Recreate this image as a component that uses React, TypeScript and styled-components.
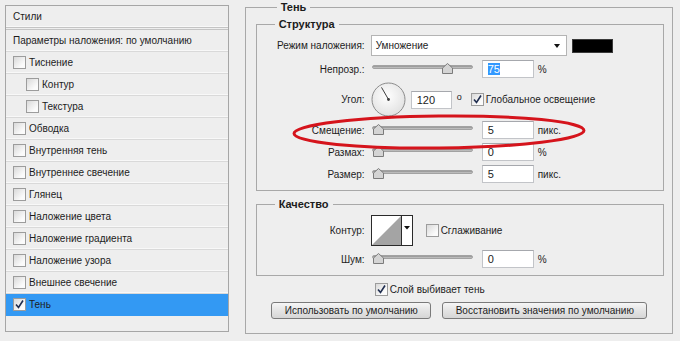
import React from 'react';
import styled, { createGlobalStyle } from 'styled-components';

const GlobalStyle = createGlobalStyle`
  html, body {
    margin: 0;
    padding: 0;
    background: #eeeeee;
  }
  body {
    font-family: "Liberation Sans", Arial, sans-serif;
    font-size: 10px;
    color: #1c1c1c;
  }
`;

const Root = styled.div`
  position: relative;
  width: 680px;
  height: 341px;
  box-sizing: border-box;
  padding: 1px 7px 0 5px;
  display: flex;
  align-items: flex-start;
  gap: 16px;
  overflow: hidden;
`;

const StylesPanel = styled.div`
  margin-top: 4px;
  width: 224px;
  height: 327px;
  box-sizing: border-box;
  border: 1px solid #a6a6a6;
  display: flex;
  flex-direction: column;
`;

const ListRow = styled.div<{ $indent?: boolean; $active?: boolean; $header?: boolean }>`
  height: 21px;
  flex: none;
  display: flex;
  align-items: center;
  gap: 3px;
  padding-left: ${p => (p.$indent ? 20 : 7)}px;
  background: ${p => (p.$active ? '#3399f3' : 'transparent')};
  border-bottom: ${p => (p.$header ? '3px double #c4c4c4' : p.$active ? '1px solid #3399f3' : '1px solid #d9d9d9')};
  box-shadow: ${p => (p.$active ? 'none' : 'inset 0 -1px 0 #f8f8f8')};
`;

const Box = styled.span`
  width: 13px;
  height: 13px;
  box-sizing: border-box;
  flex: none;
  border: 1px solid #9c9c9c;
  background: linear-gradient(135deg, #d9d9d9, #fbfbfb 75%);
  display: inline-flex;
  align-items: center;
  justify-content: center;
`;

const Check = ({ checked }: { checked?: boolean }) => (
  <Box>
    {checked && (
      <svg width="9" height="9" viewBox="0 0 9 9">
        <path d="M1 4.5 L3.5 7.5 L8 0.5" fill="none" stroke="#1f2d4f" strokeWidth="1.6" />
      </svg>
    )}
  </Box>
);

const Shadow = styled.fieldset`
  margin: 0;
  width: 429px;
  height: 333px;
  box-sizing: border-box;
  border: 1px solid #a8a8a8;
  padding: 4px 9px 0 10px;
  display: flex;
  flex-direction: column;
  min-width: 0;
`;

const Legend = styled.legend`
  font-weight: bold;
  font-size: 11px;
  padding: 0 4px;
  margin-left: 21px;
  line-height: 13px;
`;

const Group = styled.fieldset<{ $top?: number }>`
  margin: ${p => p.$top ?? 0}px 0 0 0;
  width: 408px;
  box-sizing: border-box;
  border: 1px solid #a8a8a8;
  padding: 4px 0 7px 0;
  display: flex;
  flex-direction: column;
  gap: 4px;
  min-width: 0;
`;

const GroupLegend = styled(Legend)`
  margin-left: 18px;
`;

const Row = styled.div<{ $h: number }>`
  height: ${p => p.$h}px;
  display: flex;
  align-items: center;
`;

const Label = styled.span`
  width: 108px;
  margin-right: 6px;
  text-align: right;
  flex: none;
`;

const Select = styled.div`
  width: 196px;
  height: 21px;
  box-sizing: border-box;
  border: 1px solid #b4b4b4;
  background: #fff;
  display: flex;
  align-items: center;
  justify-content: space-between;
  padding: 0 6px 0 4px;
`;

const Arrow = styled.span`
  width: 0;
  height: 0;
  border-left: 3.5px solid transparent;
  border-right: 3.5px solid transparent;
  border-top: 4px solid #111;
`;

const Swatch = styled.div`
  width: 41px;
  height: 14px;
  margin-left: 5px;
  background: #000;
  border: 1px solid #3a3a3a;
  box-sizing: border-box;
`;

const SliderBox = styled.div`
  position: relative;
  width: 101px;
  height: 12px;
  margin: 0 9px 0 1px;
  align-self: flex-start;
  margin-top: 3px;
`;

const Track = styled.div`
  position: absolute;
  left: 0;
  right: 0;
  top: 2px;
  height: 4px;
  border-radius: 2px;
  background: linear-gradient(#8f8f8f, #c9c9c9);
  border: 1px solid #a2a2a2;
  box-sizing: border-box;
`;

const Thumb = styled.svg`
  position: absolute;
  top: 0;
`;

const Slider = ({ value }: { value: number }) => (
  <SliderBox>
    <Track />
    <Thumb width="11" height="11" viewBox="0 0 11 11" style={{ left: 1 + (value / 100) * 93 }}>
      <path d="M5.5 0.5 L10.5 5 L10.5 10.5 L0.5 10.5 L0.5 5 Z" fill="#d4d4d4" stroke="#7b7b7b" />
    </Thumb>
  </SliderBox>
);

const Field = styled.div<{ $w?: number }>`
  width: ${p => p.$w ?? 52}px;
  height: 18px;
  box-sizing: border-box;
  border: 1px solid #c2c4c8;
  border-top-color: #a6a8ad;
  background: #fff;
  display: flex;
  align-items: center;
  padding-left: 5px;
  font-size: 11px;
`;

const Selected = styled.span`
  background: #3399ff;
  color: #fff;
`;

const Unit = styled.span`
  margin-left: 4px;
`;

const Degree = styled.span`
  margin: -6px 0 0 5px;
  font-size: 9px;
`;

const Inline = styled.label<{ $ml: number }>`
  display: flex;
  align-items: center;
  gap: 2px;
  margin-left: ${p => p.$ml}px;
`;

const Dial = ({ angle }: { angle: number }) => {
  const r = (angle * Math.PI) / 180;
  const x = 17.5 + Math.cos(r) * 14;
  const y = 17.5 - Math.sin(r) * 14;
  return (
    <svg width="35" height="35" viewBox="0 0 35 35">
      <defs>
        <radialGradient id="dialFill" cx="0.45" cy="0.4" r="0.6">
          <stop offset="0" stopColor="#ffffff" />
          <stop offset="1" stopColor="#e2e2e2" />
        </radialGradient>
      </defs>
      <circle cx="17.5" cy="17.5" r="16.5" fill="url(#dialFill)" stroke="#8c8c8c" />
      <line x1="17.5" y1="17.5" x2={x} y2={y} stroke="#3d3d3d" strokeWidth="1" />
      <circle cx="17.5" cy="17.5" r="1.4" fill="#3d3d3d" />
    </svg>
  );
};

const Contour = () => (
  <svg width="42" height="31" viewBox="0 0 42 31">
    <rect x="0.5" y="0.5" width="41" height="30" fill="#fff" stroke="#2a2a2a" />
    <path d="M1 30 L30 1 L30 30 Z" fill="#a4a4a4" />
    <line x1="30.5" y1="1" x2="30.5" y2="30" stroke="#2a2a2a" />
    <path d="M33 11 L39 11 L36 14.5 Z" fill="#111" />
  </svg>
);

const KnockRow = styled.div`
  margin-top: 7px;
  padding-left: 119px;
  display: flex;
  align-items: center;
  gap: 2px;
  height: 13px;
`;

const Buttons = styled.div`
  margin-top: 6px;
  display: flex;
  justify-content: center;
  gap: 11px;
`;

const Button = styled.button<{ $w: number }>`
  width: ${p => p.$w}px;
  height: 17px;
  padding: 0;
  font-family: inherit;
  font-size: 10px;
  color: #1c1c1c;
  border: 1px solid #7a7a7a;
  border-radius: 3px;
  background: linear-gradient(#f6f6f6, #e4e4e4 50%, #d6d6d6);
`;

const Annotation = styled.svg`
  position: absolute;
  left: 291px;
  top: 113px;
  pointer-events: none;
`;

const effects: { name: string; indent?: boolean; checked?: boolean }[] = [
  { name: 'Тиснение' },
  { name: 'Контур', indent: true },
  { name: 'Текстура', indent: true },
  { name: 'Обводка' },
  { name: 'Внутренняя тень' },
  { name: 'Внутреннее свечение' },
  { name: 'Глянец' },
  { name: 'Наложение цвета' },
  { name: 'Наложение градиента' },
  { name: 'Наложение узора' },
  { name: 'Внешнее свечение' },
  { name: 'Тень', checked: true },
];

export default function App() {
  return (
    <>
      <GlobalStyle />
      <Root>
        <StylesPanel>
          <ListRow $header>Стили</ListRow>
          <ListRow>Параметры наложения: по умолчанию</ListRow>
          {effects.map(e => (
            <ListRow key={e.name} $indent={e.indent} $active={e.checked}>
              <Check checked={e.checked} />
              {e.name}
            </ListRow>
          ))}
        </StylesPanel>

        <Shadow>
          <Legend>Тень</Legend>
          <Group>
            <GroupLegend>Структура</GroupLegend>
            <Row $h={21}>
              <Label>Режим наложения:</Label>
              <Select>
                Умножение
                <Arrow />
              </Select>
              <Swatch />
            </Row>
            <Row $h={18}>
              <Label>Непрозр.:</Label>
              <Slider value={75} />
              <Field>
                <Selected>75</Selected>
              </Field>
              <Unit>%</Unit>
            </Row>
            <Row $h={35}>
              <Label>Угол:</Label>
              <Dial angle={120} />
              <Field $w={41} style={{ marginLeft: 5 }}>120</Field>
              <Degree>o</Degree>
              <Inline $ml={9}>
                <Check checked />
                Глобальное освещение
              </Inline>
            </Row>
            <Row $h={18}>
              <Label>Смещение:</Label>
              <Slider value={0} />
              <Field>5</Field>
              <Unit>пикс.</Unit>
            </Row>
            <Row $h={18}>
              <Label>Размах:</Label>
              <Slider value={0} />
              <Field>0</Field>
              <Unit>%</Unit>
            </Row>
            <Row $h={18}>
              <Label>Размер:</Label>
              <Slider value={0} />
              <Field>5</Field>
              <Unit>пикс.</Unit>
            </Row>
          </Group>

          <Group $top={7}>
            <GroupLegend>Качество</GroupLegend>
            <Row $h={31}>
              <Label>Контур:</Label>
              <Contour />
              <Inline $ml={13}>
                <Check />
                Сглаживание
              </Inline>
            </Row>
            <Row $h={18}>
              <Label>Шум:</Label>
              <Slider value={0} />
              <Field>0</Field>
              <Unit>%</Unit>
            </Row>
          </Group>

          <KnockRow>
            <Check checked />
            Слой выбивает тень
          </KnockRow>
          <Buttons>
            <Button $w={160}>Использовать по умолчанию</Button>
            <Button $w={205}>Восстановить значения по умолчанию</Button>
          </Buttons>
        </Shadow>

        <Annotation width="296" height="38" viewBox="0 0 296 38">
          <ellipse cx="148" cy="19" rx="145" ry="16" fill="none" stroke="#d5141c" strokeWidth="3" transform="rotate(-0.6 148 19)" />
        </Annotation>
      </Root>
    </>
  );
}
